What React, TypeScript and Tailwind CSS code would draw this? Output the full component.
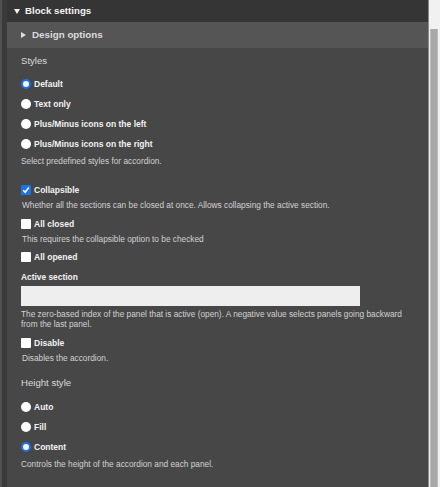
import React from 'react';

const font = { fontFamily: '"Liberation Sans", Arial, sans-serif' };

function Radio({ checked }: { checked?: boolean }) {
  return checked ? (
    <span className="w-[10px] h-[10px] rounded-full bg-[#f4f4f4] border-2 border-[#1a73e8] shrink-0" />
  ) : (
    <span className="w-[10px] h-[10px] rounded-full bg-white shrink-0" />
  );
}

function Checkbox({ checked }: { checked?: boolean }) {
  return (
    <span
      className={
        'w-[10px] h-[10px] rounded-[1px] shrink-0 flex items-center justify-center ' +
        (checked ? 'bg-[#1a73e8]' : 'bg-white')
      }
    >
      {checked && (
        <svg width="8" height="8" viewBox="0 0 8 8" aria-hidden="true">
          <path d="M1.2 4.2 L3.2 6.2 L6.8 1.6" fill="none" stroke="white" strokeWidth="1.6" />
        </svg>
      )}
    </span>
  );
}

function RadioRow({ label, checked }: { label: string; checked?: boolean }) {
  return (
    <div className="h-[20px] flex items-center gap-[3px]">
      <Radio checked={checked} />
      <span className="text-[8.5px] font-bold text-[#f2f2f2]">{label}</span>
    </div>
  );
}

function CheckRow({ label, checked, className = '' }: { label: string; checked?: boolean; className?: string }) {
  return (
    <div className={'h-[18px] flex items-center gap-[3px] ' + className}>
      <Checkbox checked={checked} />
      <span className="text-[8.5px] font-bold text-[#f2f2f2]">{label}</span>
    </div>
  );
}

export default function App() {
  return (
    <div className="w-[440px] h-[487px] flex overflow-hidden bg-[#474747]" style={font}>
      {/* left edge */}
      <div className="w-[7px] shrink-0 bg-[#3a3a3a] border-l-2 border-[#505050]" />

      {/* settings panel */}
      <div className="flex-1 flex flex-col bg-[#474747]">
        <div className="h-[22px] bg-[#353535] flex items-center pl-[7px] gap-[5px]">
          <svg width="6" height="5" viewBox="0 0 6 5" aria-hidden="true">
            <path d="M0 0 H6 L3 5 Z" fill="#f2f2f2" />
          </svg>
          <span className="text-[9.7px] font-bold text-[#f2f2f2]">Block settings</span>
        </div>
        <div className="h-[26px] bg-[#555555] flex items-center pl-[14px] gap-[6px]">
          <svg width="5" height="6" viewBox="0 0 5 6" aria-hidden="true">
            <path d="M0 0 L5 3 L0 6 Z" fill="#dcdcdc" />
          </svg>
          <span className="text-[9.8px] font-bold text-[#dcdcdc]">Design options</span>
        </div>

        <div className="px-[14px] flex flex-col">
          <div className="mt-[5px] h-[16px] leading-[16px] text-[9.6px] text-[#dadada]">Styles</div>
          <div className="mt-[5px] flex flex-col">
            <RadioRow label="Default" checked />
            <RadioRow label="Text only" />
            <RadioRow label="Plus/Minus icons on the left" />
            <RadioRow label="Plus/Minus icons on the right" />
          </div>
          <div className="h-[14px] leading-[14px] text-[8.3px] text-[#d2d2d2]">
            Select predefined styles for accordion.
          </div>

          <CheckRow label="Collapsible" checked className="mt-[13px]" />
          <div className="h-[13px] leading-[13px] pl-[1px] text-[8.3px] text-[#d2d2d2]">
            Whether all the sections can be closed at once. Allows collapsing the active section.
          </div>
          <CheckRow label="All closed" className="mt-[3px]" />
          <div className="h-[12px] leading-[12px] pl-[1px] text-[8.3px] text-[#d2d2d2]">
            This requires the collapsible option to be checked
          </div>
          <CheckRow label="All opened" className="mt-[3px]" />

          <div className="mt-[4px] h-[14px] leading-[14px] text-[8.4px] font-bold text-[#f2f2f2]">Active section</div>
          <input
            type="text"
            aria-label="Active section"
            className="mt-[2px] w-[339px] h-[20px] bg-[#eeeeee] border-0 outline-none"
          />
          <div className="mt-[3px] leading-[10px] text-[8.3px] text-[#d2d2d2] pr-[4px]">
            The zero-based index of the panel that is active (open). A negative value selects panels going backward
            from the last panel.
          </div>
          <CheckRow label="Disable" className="mt-[5px]" />
          <div className="h-[12px] leading-[12px] pl-[1px] text-[8.3px] text-[#d2d2d2]">Disables the accordion.</div>

          <div className="mt-[11px] h-[16px] leading-[16px] text-[9.6px] text-[#dadada]">Height style</div>
          <div className="mt-[6px] flex flex-col">
            <RadioRow label="Auto" />
            <RadioRow label="Fill" />
            <RadioRow label="Content" checked />
          </div>
          <div className="mt-[1px] h-[12px] leading-[12px] text-[8.3px] text-[#d2d2d2]">
            Controls the height of the accordion and each panel.
          </div>
        </div>
      </div>

      {/* scrollbar */}
      <div className="w-[12px] shrink-0 bg-[#f1f1f1] border-l border-[#8a8a8a] flex flex-col pt-[29px] pl-[1px] pr-[2px]">
        <div className="flex-1 bg-[#a8a8a8] border-x border-[#bcbcbc]" />
      </div>
    </div>
  );
}
